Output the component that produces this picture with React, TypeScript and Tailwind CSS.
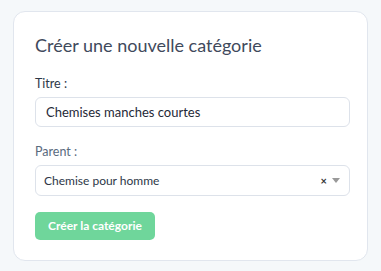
import React from 'react';

export default function App() {
  return (
    <div className="min-h-[271px] w-[381px] bg-[#f5f8fa] px-[13px] py-[11px] font-['Lato','Noto_Sans',sans-serif]">
      <div className="rounded-[12px] border border-[#e1e6ee] bg-white px-[21px] pt-[20px] pb-[20px]">
        <h1 className="text-[18px] leading-[26px] text-[#3f4a5c]">Créer une nouvelle catégorie</h1>

        <label className="mt-[18px] block text-[12.5px] leading-[16px] text-[#2d3748]">Titre :</label>
        <input
          className="mt-[5px] block h-[30px] w-[315px] rounded-[6px] border border-[#dde2ea] px-[10px] text-[13px] text-[#1f2937] outline-none"
          defaultValue="Chemises manches courtes"
        />

        <label className="mt-[17px] block text-[12.5px] leading-[16px] text-[#5a6a7e]">Parent :</label>
        <div className="mt-[5px] flex h-[31px] w-[315px] items-center rounded-[6px] border border-[#dde2ea] pl-[8px] pr-[9px]">
          <span className="flex-1 text-[12px] text-[#2d3748]">Chemise pour homme</span>
          <span className="text-[11px] font-bold leading-none text-[#333]">×</span>
          <svg width="8" height="5" viewBox="0 0 8 5" className="ml-[5px]">
            <path d="M0 0 L8 0 L4 5 Z" fill="#999" />
          </svg>
        </div>

        <button className="mt-[16px] h-[28px] rounded-[5px] bg-[#6fd69b] px-[13px] text-[12px] font-bold text-white">
          Créer la catégorie
        </button>
      </div>
    </div>
  );
}
